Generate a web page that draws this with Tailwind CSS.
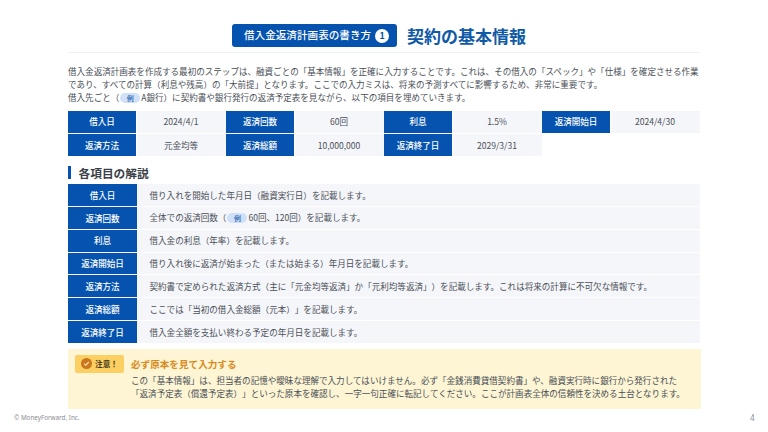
<!DOCTYPE html>
<html lang="ja">
  <head>
    <meta charset="UTF-8" />
    <title>契約の基本情報</title>
    <script src="https://cdn.jsdelivr.net/npm/@tailwindcss/browser@4"></script>
  </head>
  <body class="w-[768px] h-[432px] overflow-hidden bg-white text-[#4a4f57] [text-spacing-trim:space-all] font-['Noto_Sans_CJK_JP','Noto_Sans',sans-serif]">
    <div class="relative w-[768px] h-[432px] flex flex-col px-[68px]">
      <!-- header -->
      <div class="h-[29px] mt-[24px] pl-[164px] flex items-start gap-[10px] border-b border-[#eef0fa]">
        <div class="h-[23px] w-[165px] pl-[12px] flex items-center gap-[4px] bg-[#0553ae] rounded-[3px] text-white text-[10.6px] leading-none font-medium">
          <span class="whitespace-nowrap">借入金返済計画表の書き方</span>
          <span class="w-[14px] h-[14px] rounded-full bg-white text-[#0553ae] text-[9px] font-bold flex items-center justify-center">1</span>
        </div>
        <h1 class="text-[17px] leading-[23px] font-bold text-[#0f5aa6]">契約の基本情報</h1>
      </div>

      <!-- intro -->
      <div class="mt-[11.5px] text-[8.55px] leading-[13.4px] whitespace-nowrap">
        <p>借入金返済計画表を作成する最初のステップは、融資ごとの「基本情報」を正確に入力することです。これは、その借入の「スペック」や「仕様」を確定させる作業</p>
        <p>であり、すべての計算（利息や残高）の「大前提」となります。ここでの入力ミスは、将来の予測すべてに影響するため、非常に重要です。</p>
        <p>借入先ごと（<span class="inline-block w-[20px] h-[10px] mx-[1px] rounded-full bg-[#cfe0f8] text-[#2b62ad] text-[7px] leading-[10px] text-center font-medium">例</span>A銀行）に契約書や銀行発行の返済予定表を見ながら、以下の項目を埋めていきます。</p>
      </div>

      <!-- basic info table -->
      <div class="mt-[6px] grid grid-cols-[68px_89px_68px_89px_68px_89px_68px_89px] gap-x-[0.5px] gap-y-[1.5px] w-[632px] text-[8.55px] leading-none">
        <div class="h-[22px] flex items-center justify-center bg-[#0553ae] text-white font-medium">借入日</div>
        <div class="h-[22px] flex items-center justify-center bg-[#f5f6fa]">2024/4/1</div>
        <div class="h-[22px] flex items-center justify-center bg-[#0553ae] text-white font-medium">返済回数</div>
        <div class="h-[22px] flex items-center justify-center bg-[#f5f6fa]">60回</div>
        <div class="h-[22px] flex items-center justify-center bg-[#0553ae] text-white font-medium">利息</div>
        <div class="h-[22px] flex items-center justify-center bg-[#f5f6fa]">1.5%</div>
        <div class="h-[22px] flex items-center justify-center bg-[#0553ae] text-white font-medium">返済開始日</div>
        <div class="h-[22px] flex items-center justify-center bg-[#f5f6fa]">2024/4/30</div>
        <div class="h-[22px] flex items-center justify-center bg-[#0553ae] text-white font-medium">返済方法</div>
        <div class="h-[22px] flex items-center justify-center bg-[#f5f6fa]">元金均等</div>
        <div class="h-[22px] flex items-center justify-center bg-[#0553ae] text-white font-medium">返済総額</div>
        <div class="h-[22px] flex items-center justify-center bg-[#f5f6fa]">10,000,000</div>
        <div class="h-[22px] flex items-center justify-center bg-[#0553ae] text-white font-medium">返済終了日</div>
        <div class="h-[22px] flex items-center justify-center bg-[#f5f6fa]">2029/3/31</div>
      </div>

      <!-- section heading -->
      <div class="mt-[10px] h-[13px] flex items-center gap-[8px]">
        <span class="w-[2.5px] h-[13px] bg-[#0553ae]"></span>
        <h2 class="text-[11.7px] leading-none font-bold text-[#3a3f47]">各項目の解説</h2>
      </div>

      <!-- explanations -->
      <div class="mt-[5px] flex flex-col gap-[1px] w-[632px] text-[8.55px] leading-none">
        <div class="h-[21.8px] flex bg-[#f5f6fa]">
          <div class="w-[69px] flex items-center justify-center bg-[#0553ae] text-white font-medium">借入日</div>
          <div class="flex items-center pl-[12.5px]">借り入れを開始した年月日（融資実行日）を記載します。</div>
        </div>
        <div class="h-[21.8px] flex bg-[#f5f6fa]">
          <div class="w-[69px] flex items-center justify-center bg-[#0553ae] text-white font-medium">返済回数</div>
          <div class="flex items-center pl-[12.5px]">
            <p>全体での返済回数（<span class="inline-block w-[20px] h-[10px] mx-[1px] rounded-full bg-[#cfe0f8] text-[#2b62ad] text-[7px] leading-[10px] text-center font-medium">例</span>60回、120回）を記載します。</p>
          </div>
        </div>
        <div class="h-[21.8px] flex bg-[#f5f6fa]">
          <div class="w-[69px] flex items-center justify-center bg-[#0553ae] text-white font-medium">利息</div>
          <div class="flex items-center pl-[12.5px]">借入金の利息（年率）を記載します。</div>
        </div>
        <div class="h-[21.8px] flex bg-[#f5f6fa]">
          <div class="w-[69px] flex items-center justify-center bg-[#0553ae] text-white font-medium">返済開始日</div>
          <div class="flex items-center pl-[12.5px]">借り入れ後に返済が始まった（または始まる）年月日を記載します。</div>
        </div>
        <div class="h-[21.8px] flex bg-[#f5f6fa]">
          <div class="w-[69px] flex items-center justify-center bg-[#0553ae] text-white font-medium">返済方法</div>
          <div class="flex items-center pl-[12.5px]">契約書で定められた返済方式（主に「元金均等返済」か「元利均等返済」）を記載します。これは将来の計算に不可欠な情報です。</div>
        </div>
        <div class="h-[21.8px] flex bg-[#f5f6fa]">
          <div class="w-[69px] flex items-center justify-center bg-[#0553ae] text-white font-medium">返済総額</div>
          <div class="flex items-center pl-[12.5px]">ここでは「当初の借入金総額（元本）」を記載します。</div>
        </div>
        <div class="h-[21.8px] flex bg-[#f5f6fa]">
          <div class="w-[69px] flex items-center justify-center bg-[#0553ae] text-white font-medium">返済終了日</div>
          <div class="flex items-center pl-[12.5px]">借入金全額を支払い終わる予定の年月日を記載します。</div>
        </div>
      </div>

      <!-- caution -->
      <div class="mt-[6px] h-[60px] w-[633px] bg-[#fdf5d3] flex items-start pl-[7px] pt-[6px]">
        <div class="h-[18px] w-[49px] rounded-[2px] bg-[#fbcf62] flex items-center justify-center gap-[3px] text-[7.6px] font-bold leading-none text-[#4a3a20]">
          <svg width="11" height="11" viewBox="0 0 11 11"><circle cx="5.5" cy="5.5" r="5.5" fill="#c9761c" /><path d="M3.2 5.6l1.6 1.6 3-3.2" fill="none" stroke="#fbe3a8" stroke-width="1.2" /></svg>
          <span>注意！</span>
        </div>
        <div class="ml-[7px]">
          <p class="text-[9.6px] leading-[18px] font-bold text-[#d98a1f]">必ず原本を見て入力する</p>
          <div class="mt-[1px] text-[8.55px] leading-[13.6px] whitespace-nowrap">
            <p>この「基本情報」は、担当者の記憶や曖昧な理解で入力してはいけません。必ず「金銭消費貸借契約書」や、融資実行時に銀行から発行された</p>
            <p>「返済予定表（償還予定表）」といった原本を確認し、一字一句正確に転記してください。ここが計画表全体の信頼性を決める土台となります。</p>
          </div>
        </div>
      </div>

      <!-- footer -->
      <div class="absolute left-[14px] top-[413px] text-[6.3px] leading-[10px] text-[#8a8d92] font-['Noto_Sans',sans-serif]">© MoneyForward, Inc.</div>
      <div class="absolute left-[750px] top-[412px] text-[8px] leading-[12px] text-[#8a8d92] font-['Noto_Sans',sans-serif]">4</div>
    </div>
  </body>
</html>
